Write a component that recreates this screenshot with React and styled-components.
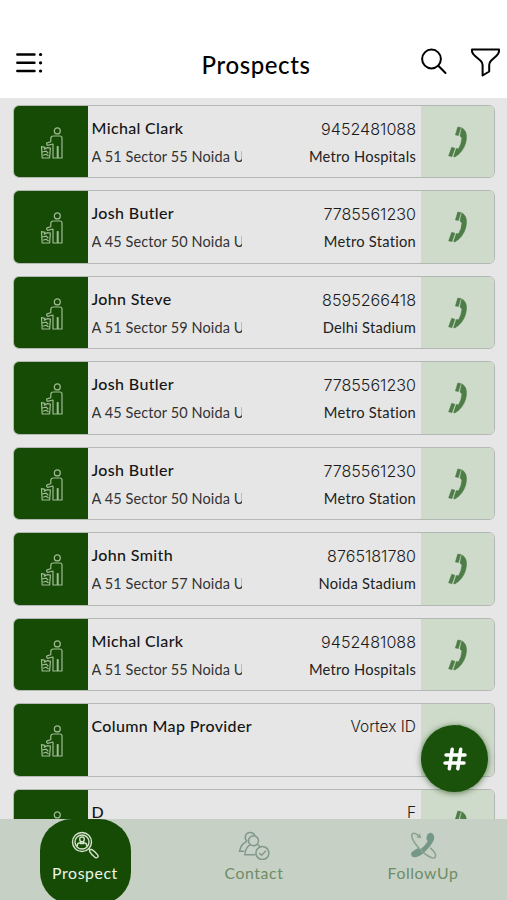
import React from 'react';
import styled, { createGlobalStyle } from 'styled-components';

const GlobalStyle = createGlobalStyle`
  * {
    box-sizing: border-box;
  }

  body {
    margin: 0;
    background: #e6e6e6;
    font-family: Lato, 'Open Sans', sans-serif;
    font-variant-ligatures: none;
    color: #151515;
  }

  svg {
    display: block;
  }
`;

const Screen = styled.div`
  position: relative;
  display: flex;
  flex-direction: column;
  height: 900px;
  overflow: hidden;
  background: #e6e6e6;
`;

const Header = styled.header`
  flex: none;
  display: grid;
  grid-template-columns: 1fr auto 1fr;
  align-items: center;
  height: 98px;
  padding: 27px 7px 0 16px;
  background: #fff;
`;

const Title = styled.h1`
  margin: 4px 0 0 -4px;
  font-size: 24px;
  font-weight: 500;
  line-height: 28px;
  letter-spacing: 0.6px;
  color: #000;
`;

const Actions = styled.div`
  display: flex;
  justify-content: flex-end;
  align-items: flex-start;
  gap: 24px;
`;

const List = styled.main`
  flex: 1;
  min-height: 0;
  display: flex;
  flex-direction: column;
  gap: 12px;
  padding: 6.5px 12px 0 13px;
  overflow: hidden;
`;

const Card = styled.article`
  flex: none;
  display: flex;
  height: 73.5px;
  border: 1px solid #b4b8b4;
  border-radius: 6px;
  overflow: hidden;
`;

const Avatar = styled.div`
  flex: none;
  display: flex;
  justify-content: center;
  width: 75px;
  margin: 0 0 0 -1px;
  padding: 21px 0 0 2px;
  background: #164b06;
`;

const Details = styled.div`
  flex: 1;
  display: flex;
  justify-content: space-between;
  padding: 12px 5px 0 3.5px;
`;

const Column = styled.div`
  display: flex;
  flex-direction: column;
  gap: 9px;
  align-items: ${({ $end }) => ($end ? 'flex-end' : 'flex-start')};
  white-space: nowrap;
`;

const Name = styled.div`
  font-size: 16px;
  font-weight: 500;
  line-height: 20px;
  letter-spacing: 0.35px;
`;

const Address = styled.div`
  width: 150px;
  overflow: hidden;
  font-size: 14.5px;
  line-height: 19px;
  letter-spacing: 0.1px;
  color: #333;
`;

const Phone = styled.div`
  padding-top: 1px;
  font-family: Inter, sans-serif;
  font-size: ${({ $text }) => ($text ? '15.5px' : '16.1px')};
  font-weight: 300;
  line-height: 20px;
  color: #1c1c1c;
`;

const Company = styled.div`
  margin-top: -1px;
  font-size: 14.7px;
  line-height: 19px;
  letter-spacing: 0.25px;
  color: #222;
`;

const Call = styled.div`
  flex: none;
  display: flex;
  justify-content: center;
  width: 73px;
  padding-top: 20px;
  background: #cfdbca;
`;

const TabBar = styled.nav`
  flex: none;
  display: grid;
  grid-template-columns: repeat(3, 1fr);
  justify-items: center;
  height: 81px;
  background: #c7d0c5;
`;

const Tab = styled.div`
  display: flex;
  flex-direction: column;
  align-items: center;
  gap: 2px;
  width: 91px;
  height: 85px;
  margin-left: 1px;
  padding-top: 12px;
  border-radius: 32px;
  background: ${({ $active }) => ($active ? '#164b06' : 'transparent')};
  color: ${({ $active }) => ($active ? '#eef5ea' : '#6d8d65')};
  font-size: 15.8px;
  line-height: 22px;
  letter-spacing: 0.6px;
`;

const HashButton = styled.div`
  position: absolute;
  right: 19px;
  bottom: 108px;
  display: flex;
  align-items: center;
  justify-content: center;
  width: 67px;
  height: 67px;
  border-radius: 50%;
  background: #1b520b;
  box-shadow: 0 1px 6px rgba(20, 65, 10, 0.65);
`;

const prospects = [
  { name: 'Michal Clark', address: 'A 51 Sector 55 Noida U', phone: '9452481088', company: 'Metro Hospitals' },
  { name: 'Josh Butler', address: 'A 45 Sector 50 Noida U', phone: '7785561230', company: 'Metro Station' },
  { name: 'John Steve', address: 'A 51 Sector 59 Noida U', phone: '8595266418', company: 'Delhi Stadium' },
  { name: 'Josh Butler', address: 'A 45 Sector 50 Noida U', phone: '7785561230', company: 'Metro Station' },
  { name: 'Josh Butler', address: 'A 45 Sector 50 Noida U', phone: '7785561230', company: 'Metro Station' },
  { name: 'John Smith', address: 'A 51 Sector 57 Noida U', phone: '8765181780', company: 'Noida Stadium' },
  { name: 'Michal Clark', address: 'A 51 Sector 55 Noida U', phone: '9452481088', company: 'Metro Hospitals' },
  { name: 'Column Map Provider', phone: 'Vortex ID' },
  { name: 'D', phone: 'F' },
];

const MenuIcon = () => (
  <svg width="27" height="22" viewBox="0 0 27 22" fill="none" stroke="#000" strokeWidth="2.4" strokeLinecap="round">
    <path d="M1.3 2.5H18.5M1.3 10.8H18.5M1.3 19H18.5" />
    <path d="M24.5 2.5h.1M24.5 10.8h.1M24.5 19h.1" strokeWidth="3.2" />
  </svg>
);

const SearchIcon = () => (
  <svg width="26" height="27" viewBox="0 0 26 27" fill="none" stroke="#000" strokeWidth="2" strokeLinecap="round">
    <circle cx="10.5" cy="11" r="9.4" />
    <path d="M17.3 17.8L24.5 25" />
  </svg>
);

const FilterIcon = () => (
  <svg width="29" height="29" viewBox="0 0 29 29" fill="none" stroke="#000" strokeWidth="2" strokeLinejoin="round">
    <path d="M1 1.5H28V3.5Q27.6 6 25.5 7.8L20 12.7Q18.2 14.5 18.2 17V23.5L11.6 27.5V17Q11.6 14.5 9.6 12.7L3.8 7.8Q1.5 6 1 3.5Z" />
  </svg>
);

const PersonIcon = () => (
  <svg width="24" height="34" viewBox="0 0 24 34" fill="none" stroke="#9fba94" strokeWidth="1.2" strokeLinejoin="round">
    <circle cx="17.3" cy="3.9" r="3" />
    <path d="M13.5 9H20Q22 9 22 11V31H18.1V19.7H17.3V31H13V17L7.5 18.3Q6 17.2 7 15.9L10.8 14.7V11.5Q10.8 9 13.5 9Z" />
    <path d="M1.5 19.7L5 20.3L4.3 22.3L7.2 20.7L10.4 21L9.6 31H2.2ZM2 25L6.3 24.2L8.3 26.4M3 28.3L6 27.2L8.6 29" />
  </svg>
);

const HandsetIcon = () => (
  <svg width="20" height="32" viewBox="0 0 20 32" fill="#4e7d48" stroke="#4e7d48" strokeWidth=".5" strokeLinejoin="round">
    <path d="M13.7 1.8Q19 4.5 18.5 12.5Q17.6 22 10.5 28.5L6.8 31L5.6 30.5L8.3 22.6L10.6 22.7Q13.5 18 13.9 12L12 10Z" />
    <path d="M9.7 1.1L12.8 1.4L10.4 9.5L7.4 9ZM3.7 21.3L6.9 22.2L3.9 30.7L.6 29.8Z" />
  </svg>
);

const ProspectIcon = () => (
  <svg width="29" height="29" viewBox="0 0 29 29" fill="none" stroke="#d5e2cd" strokeWidth="1.4">
    <circle cx="11" cy="11" r="9.5" />
    <circle cx="11" cy="11" r="7" />
    <rect x="8.8" y="6" width="4.4" height="4.6" rx="1.8" />
    <path d="M6.4 15.3V13.8Q6.4 12 8.6 12H13.4Q15.6 12 15.6 13.8V15.3M9.5 10.5V12.5H12.5V10.5M17.7 17.3L19.4 19M18.6 20.3Q18.4 18.3 20.6 18.4Q23.3 20 26.5 23.6Q27.8 25.6 26.4 26.5Q25 27.4 23.6 26Q20.1 23 18.6 20.3Z" />
  </svg>
);

const ContactIcon = () => (
  <svg width="33" height="29" viewBox="0 0 33 29" fill="none" stroke="#81998a" strokeWidth="1.5">
    <path d="M9.3 10.4Q6.6 8.5 7.4 4.9Q8.6 1.3 12.5 1.4Q15.7 1.5 16.9 4.4M8.5 10.8Q3 12.8 1.6 20.2H6.2" />
    <circle cx="15.5" cy="9.7" r="5" />
    <path d="M12 13.9Q7.4 16.5 6.8 23.8H17.4M19 13.4Q21.2 14.4 22.4 16.1" />
    <circle cx="24.4" cy="22" r="6.5" />
    <path d="M21.2 22L23.6 24.3L28 19.8" />
  </svg>
);

const FollowUpIcon = () => (
  <svg width="29" height="29" viewBox="0 0 29 29" fill="none">
    <path d="M18.2 3.8Q20.5 .8 23.1 2.2Q26 4.5 25 8.6Q21.9 16 15 21.4Q11 25.5 6 26.2Q2.5 26.5 2.1 23Q2 20.8 4.2 20L8.6 17.3L11.2 18.5Q15.3 15.4 18.6 10.4L17.3 7.6Z" fill="#759788" />
    <path d="M10.5 5.5Q5.3 .5 3.1 3.2Q1.4 6.8 8.4 15.5Q15.8 24.3 22.8 26.8Q27.6 27.6 26.5 23.5Q25.5 20.3 21.3 16.9" stroke="#8aa292" strokeWidth="1.6" />
    <path d="M7.8 5.9L11.4 6.5L10.4 2.9" stroke="#8aa292" strokeWidth="1.4" />
  </svg>
);

const HashIcon = () => (
  <svg width="24" height="24" viewBox="0 0 24 24" fill="none" stroke="#fff" strokeWidth="3.5" strokeLinecap="round">
    <path d="M9.2 2.3L6.3 21.7M17.7 2.3L14.8 21.7M3 8H22M2 16H21" />
  </svg>
);

function App() {
  return (
    <Screen>
      <GlobalStyle />
      <Header>
        <MenuIcon />
        <Title>Prospects</Title>
        <Actions>
          <SearchIcon />
          <FilterIcon />
        </Actions>
      </Header>

      <List>
        {prospects.map((item, index) => (
          <Card key={index}>
            <Avatar><PersonIcon /></Avatar>
            <Details>
              <Column>
                <Name>{item.name}</Name>
                {item.address && <Address>{item.address}</Address>}
              </Column>
              <Column $end>
                <Phone $text={!item.company}>{item.phone}</Phone>
                {item.company && <Company>{item.company}</Company>}
              </Column>
            </Details>
            <Call><HandsetIcon /></Call>
          </Card>
        ))}
      </List>

      <TabBar>
        <Tab $active><ProspectIcon />Prospect</Tab>
        <Tab><ContactIcon />Contact</Tab>
        <Tab><FollowUpIcon />FollowUp</Tab>
      </TabBar>

      <HashButton><HashIcon /></HashButton>
    </Screen>
  );
}

export default App;
